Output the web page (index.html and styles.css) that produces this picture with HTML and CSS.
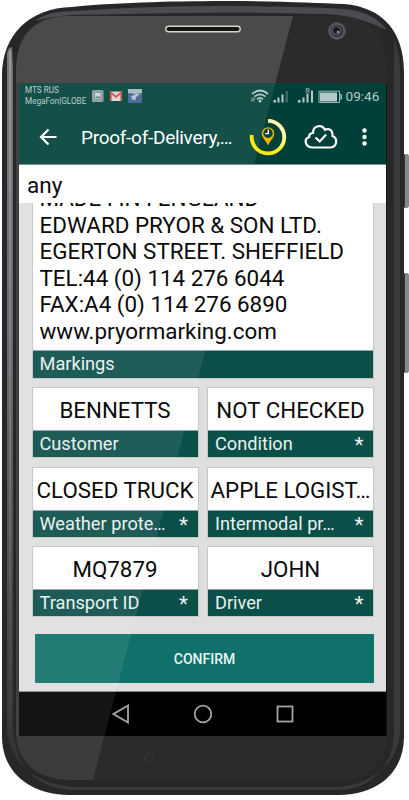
FILE: index.html
```html
<!DOCTYPE html>
<html lang="en">
<head>
<meta charset="UTF-8" />
<meta name="viewport" content="width=device-width, initial-scale=1" />
<title>Proof-of-Delivery</title>
<link rel="stylesheet" href="styles.css">
</head>
<body>

<div class="phone">
  <!-- phone body -->
  <svg class="phone-body" viewBox="0 0 409 800" aria-hidden="true">
    <defs>
      <linearGradient id="rim" x1="0" x2="0" y1="0" y2="1">
        <stop offset="0" stop-color="#77777e" />
        <stop offset=".4" stop-color="#6b6b73" />
        <stop offset=".7" stop-color="#515156" />
        <stop offset="1" stop-color="#303030" />
      </linearGradient>
      <linearGradient id="shine" x1="0" x2="0" y1="0" y2="1">
        <stop offset="0" stop-color="#a5a5ac" />
        <stop offset=".6" stop-color="#7c7c84" />
        <stop offset="1" stop-color="#3c3c40" />
      </linearGradient>
    </defs>
    <path d="M403 154h4q2 0 2 3v48q0 3-2 3h-4zM403 273h4q2 0 2 3v94q0 3-2 3h-4z" fill="#88888a" />
    <path d="M403 155h2v52h-2zM403 274h2v98h-2z" fill="#343436" />
    <path d="M2 76C2 35 29 8 72 7C120 2 185 1 230 1C280 1 318 3 344 4C382 7 404 31 404 72V738C403 774 377 794 340 795H68C30 794 2 773 2 736z" fill="#272727" />
    <path d="M35 21Q47 11 74 11Q150 6 220 6Q300 6 344 9Q372 11 387 30Q351 13 318 14Q240 12 180 13L72 15Q48 17 35 21z" fill="#4b4b51" />
    <path d="M7 54Q8 47 12 47L13 70V726Q15 757 29 772Q10 757 7 732z" fill="url(#rim)" />
    <path d="M9 51h2v679h-2z" fill="url(#shine)" opacity=".7" />
    <path d="M394 40Q401 54 400 76V732Q398 756 383 768Q394 753 394 732z" fill="#39393b" />
    <path d="M30 773Q48 785 72 787H340Q366 784 381 770Q368 788 340 790H70Q45 788 30 773z" fill="#3a3a3a" />
    <path d="M16 67Q18 19 65 16H343Q388 20 388 76V735Q386 776 344 780H66Q19 776 16 735z" fill="#2b2b2b" />
    <path d="M16 67Q18 19 65 16H293L275.500 83H16zM16 735H104.500L93 780H66Q19 776 16 735z" fill="#fff" fill-opacity=".08" />
    <path d="M16 67Q18 19 65 16H293L275.500 83H16z" fill="#fff" fill-opacity=".08" />
    <rect x="16" y="83" width="3" height="652" fill="#414141" />
    <path d="M386.500 83V736" stroke="#111" />
    <rect x="165.800" y="26.300" width="74.400" height="5.400" rx="2.700" fill="#161512" stroke="#d7d4cf" stroke-width="1.400" />
    <circle cx="337" cy="31" r="9" fill="#4b4c54" />
    <circle cx="337" cy="31" r="7" fill="#34353a" stroke="#686973" />
    <circle cx="336.500" cy="30.500" r="4" fill="#19191b" stroke="#777982" stroke-width=".8" />
    <circle cx="338" cy="32" r="1.500" fill="#85858a" />
    <circle cx="149" cy="758" r="4.500" fill="none" stroke="#393939" />
  </svg>

  <div class="screen">
    <div class="status-bar">
      <div class="carrier">MTS RUS<br>MegaFon|GLOBE</div>
      <svg class="notices" width="50" height="14" viewBox="0 0 50 14">
        <rect x="0" y="1" width="11.500" height="12" rx="1.500" fill="#899b9d" />
        <path d="M2.500 3.500h6.500v6.500h-6.500z" fill="#c8d4d4" stroke="#66797b" stroke-width=".6" />
        <path d="M3 9l2-2 1 1 1-1 2 2z" fill="#60777b" />
        <rect x="18" y="2.500" width="12" height="9.500" fill="#d9d4d2" />
        <path d="M18.800 12V3.500L24 8l5.200-4.500V12" fill="none" stroke="#c84d45" stroke-width="1.700" />
        <rect x="36" y="0" width="14" height="14" fill="#405f91" />
        <path d="M36 0h14v4l-6 1-8-1z" fill="#a2b7c2" />
        <path d="M38 8l6-3 4 0-4 3-1 4-2-2-2 1 1-3z" fill="#b4c3cf" />
      </svg>
      <svg class="signals" width="92" height="18" viewBox="0 0 92 18">
        <g fill="none" stroke="#b5cac8" stroke-width="1.700">
          <path d="M2 7Q10 0 18 7M4.500 9.700Q10 5 15.500 9.700M7 12.300Q10 9.500 13 12.300" />
        </g>
        <circle cx="10" cy="14" r="1.500" fill="#b5cac8" />
        <path d="M2 10v4m-1-1.500l1 2 1-2M4 15v-4m-1 1.500l1-2 1 2" stroke="#9ab5b2" stroke-width=".6" fill="none" />
        <g fill="#b5cac8">
          <path d="M23.500 13h2.500v2.500h-2.500zM27.500 10.500h2v5h-2zM31.500 7.500h2v8h-2z" />
          <path d="M48 13h2.500v2.500h-2.500zM52.500 10.500h2v5h-2zM56.500 6.500h2v9h-2zM61 3.500h2v12h-2z" />
          <text x="55.500" y="6" font-size="7">R</text>
          <path d="M70 5.500h17v9h-17z" />
        </g>
        <path d="M35.500 4h2.500v11.500h-2.500z" fill="#356862" />
        <path d="M69 4.200h20.500v11.300h-20.500zM90 7.500h1.500v4.500h-1.500z" fill="none" stroke="#9eb9b6" />
      </svg>
      <span class="clock">09:46</span>
    </div>

    <header class="toolbar">
      <svg class="back" width="18" height="18" viewBox="0 0 18 18"><path d="M9.500 1.500L2 9l7.500 7.500M2 9h15.500" /></svg>
      <h1>Proof-of-Delivery,…</h1>
      <svg class="tracker" width="38" height="38" viewBox="0 0 38 38">
        <defs>
          <linearGradient id="ring" x1="1" x2="0" y1="0" y2="1">
            <stop offset=".2" stop-color="#fff8b0" />
            <stop offset=".6" stop-color="#ffed13" />
            <stop offset="1" stop-color="#ffe000" />
          </linearGradient>
        </defs>
        <path d="M19 2.800A16.300 16.300 0 1 1 2.800 17" fill="none" stroke="url(#ring)" stroke-width="3.800" />
        <path d="M19 27.500C17 22.500 12.800 20 12.800 15.500a6.200 6.200 0 0 1 12.400 0c0 4.500-4.200 7-6.200 12z" fill="#f5b400" />
        <circle cx="19" cy="15.200" r="4.700" fill="#06443e" />
        <path d="M19.300 11.500v4.200h-3" fill="none" stroke="#fff" stroke-width="1.300" />
      </svg>
      <svg class="cloud" width="34" height="26" viewBox="0 0 34 26">
        <path d="M8 23.500h18.500a6 6 0 0 0 2-11.500Q29 6 24 5q-2 0-3 .8C18 0 9 1 9 9c-3 0-4 2-3.800 4C-.5 15 1 23 8 23.500z" />
        <path d="M11.500 13.500l4.200 4 6.500-7" />
      </svg>
      <svg class="more" width="5" height="18" viewBox="0 0 5 18"><circle cx="2.500" cy="2.500" r="2.200" /><circle cx="2.500" cy="9" r="2.200" /><circle cx="2.500" cy="15.500" r="2.200" /></svg>
    </header>

    <div class="search">any</div>

    <main class="content">
      <section class="card markings">
        <div class="scan">
          <p>MADE I IN I ENGLAND</p>
          <p>EDWARD PRYOR &amp; SON LTD.</p>
          <p>EGERTON STREET. SHEFFIELD</p>
          <p>TEL:44 (0) 114 276 6044</p>
          <p>FAX:A4 (0) 114 276 6890</p>
          <p>www.pryormarking.com</p>
        </div>
        <div class="label"><span>Markings</span></div>
      </section>

      <div class="fields">
        <section class="card"><div class="value">BENNETTS</div><div class="label"><span>Customer</span></div></section>
        <section class="card"><div class="value">NOT CHECKED</div><div class="label"><span>Condition</span><b>*</b></div></section>
        <section class="card"><div class="value">CLOSED TRUCK</div><div class="label"><span>Weather prote…</span><b>*</b></div></section>
        <section class="card"><div class="value">APPLE LOGIST…</div><div class="label"><span>Intermodal pr…</span><b>*</b></div></section>
        <section class="card"><div class="value">MQ7879</div><div class="label"><span>Transport ID</span><b>*</b></div></section>
        <section class="card"><div class="value">JOHN</div><div class="label"><span>Driver</span><b>*</b></div></section>
      </div>

      <button class="confirm" type="button">CONFIRM</button>
    </main>

    <nav class="nav-bar">
      <svg width="18" height="20" viewBox="0 0 18 20"><path d="M16 1.500v17L1.500 10z" /></svg>
      <svg width="20" height="20" viewBox="0 0 20 20"><circle cx="10" cy="10" r="8.300" /></svg>
      <svg width="18" height="18" viewBox="0 0 18 18"><rect x="1.500" y="1.500" width="15" height="15" /></svg>
    </nav>
    <div class="glare"></div>
  </div>
</div>

</body>
</html>
```

FILE: styles.css
```css
* {
  box-sizing: border-box;
}
body {
  margin: 0;
  background: #fff;
  font-family: Roboto, sans-serif;
}
.phone {
  position: relative;
  width: 409px;
  height: 800px;
  padding: 83px 22px 64px 19px;
  overflow: hidden;
}
.phone-body {
  position: absolute;
  left: 0;
  top: 0;
  width: 409px;
  height: 800px;
}
.screen {
  position: relative;
  width: 367px;
  height: 653px;
  display: flex;
  flex-direction: column;
  background: #dfdfdf;
  overflow: hidden;
}
.status-bar {
  height: 26px;
  display: flex;
  align-items: center;
  padding: 0 6px;
  background: #004039;
  color: #b5cac8;
}
.carrier {
  width: 66px;
  font-size: 8.2px;
  line-height: 11px;
  white-space: nowrap;
}
.notices {
  margin-left: 0.5px;
}
.signals {
  margin-left: 108px;
}
.clock {
  margin-left: 4px;
  font-size: 13.6px;
}
.toolbar {
  height: 55px;
  display: flex;
  align-items: center;
  padding: 0 19.5px 0 20px;
  background: #004039;
}
.toolbar h1 {
  margin: 2px 0 0 24px;
  width: 160px;
  font-size: 19px;
  font-weight: 400;
  letter-spacing: -0.28px;
  white-space: nowrap;
  color: #fff;
}
.back,
.cloud {
  fill: none;
  stroke: #fff;
  stroke-width: 2.2;
}
.tracker {
  margin-left: 8px;
}
.cloud {
  margin-left: 17px;
}
.more {
  margin-left: auto;
  fill: #fff;
}
/* black on white stays out of the glare */
.search,
.scan,
.value {
  position: relative;
  z-index: 1;
  color: #0a0a0a;
}
.search {
  height: 39px;
  padding: 7px 8px;
  background: #fff;
  border-top: 1px solid #7d9390;
  font-size: 22.5px;
  line-height: 27px;
}
.content {
  height: 489px;
  padding: 0 12.5px;
  overflow: hidden;
  border-bottom: 1px solid #888;
}
.card {
  background: #fff;
  border: 1px solid #c5c5c5;
}
.markings {
  width: 342px;
  height: 175.5px;
  display: flex;
  flex-direction: column;
  justify-content: flex-end;
  border-top: 0;
  overflow: hidden;
}
.scan {
  padding: 0 7px 5.2px;
}
.scan p {
  margin: 0;
  font-size: 22.4px;
  line-height: 26.5px;
  white-space: nowrap;
}
.label {
  height: 28px;
  flex: none;
  display: flex;
  justify-content: space-between;
  padding: 0 9.5px 0 7px;
  background: #0b4f49;
  border-top: 1px solid #8aa3a1;
  font-size: 18.2px;
  line-height: 25px;
  white-space: nowrap;
  color: #e9f1f0;
}
.label b {
  font-weight: 400;
  font-size: 21px;
  line-height: 29px;
}
.fields {
  display: grid;
  grid-template-columns: 167px 167px;
  column-gap: 8.5px;
  row-gap: 8.6px;
  margin-top: 8.5px;
}
.fields .card {
  height: 71px;
  overflow: hidden;
}
.value {
  height: 42px;
  font-size: 22.3px;
  line-height: 45px;
  text-align: center;
  white-space: nowrap;
}
.confirm {
  display: block;
  width: 339px;
  height: 49px;
  margin: 16.5px 0 0 3.5px;
  padding-top: 3px;
  border: 1px solid #087a6f;
  background: #10706a;
  font-family: inherit;
  font-size: 14px;
  font-weight: 500;
  color: #edf5f4;
}
.nav-bar {
  flex: 1;
  display: flex;
  align-items: center;
  gap: 63px;
  padding-left: 92.5px;
  background: #000;
}
.nav-bar svg {
  fill: none;
  stroke: #a4a4a4;
  stroke-width: 1.8;
}
.glare {
  position: absolute;
  inset: 0;
  background: rgba(255, 255, 255, 0.08);
  clip-path: polygon(0 0, 256.5px 0, 85.5px 100%, 0 100%);
  pointer-events: none;
}
```
